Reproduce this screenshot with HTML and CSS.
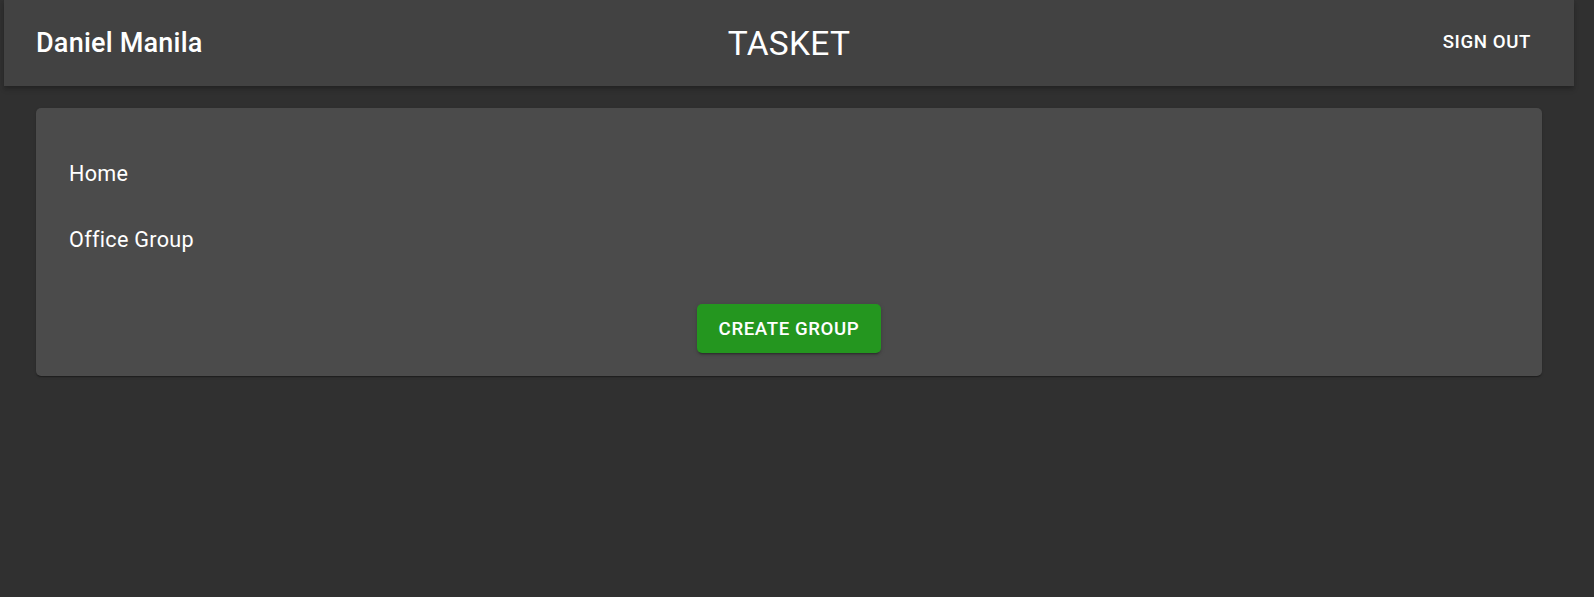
FILE: index.html
```html
<!DOCTYPE html>
<html>
<head>
    <meta charset="UTF-8">
    <title>Tasket</title>
    <link rel="stylesheet" href="styles.css">
</head>
<body>
    <header class="topbar">
        <div class="user-name">Daniel Manila</div>
        <div class="brand">TASKET</div>
        <div class="topbar-right">
            <button class="sign-out">Sign Out</button>
        </div>
    </header>

    <main class="page">
        <section class="group-card">
            <ul class="group-list">
                <li class="group-item">Home</li>
                <li class="group-item">Office Group</li>
            </ul>
            <div class="card-actions">
                <button class="create-btn">Create Group</button>
            </div>
        </section>
    </main>
</body>
</html>
```

FILE: styles.css
```css
body {
  margin: 0;
  background-color: #303030;
  color: #fff;
  font-family: Roboto, "Liberation Sans", sans-serif;
  min-height: 597px;
}

.topbar {
  display: grid;
  grid-template-columns: 1fr auto 1fr;
  align-items: center;
  height: 86px;
  margin-left: 4px;
  width: 1570px;
  padding: 0 32px;
  box-sizing: border-box;
  background-color: #424242;
  box-shadow: 0 2px 4px -1px rgba(0, 0, 0, 0.2), 0 4px 5px 0 rgba(0, 0, 0, 0.14);
}

/* medium weight */
.user-name,
.sign-out,
.create-btn {
  font-family: "Roboto Medium", Roboto, "Liberation Sans", sans-serif;
  font-weight: 400;
}

.user-name {
  font-size: 27px;
  letter-spacing: 0.2px;
}

.brand {
  font-size: 33.5px;
  font-weight: 400;
  letter-spacing: 0.3px;
  padding-top: 1px;
}

.topbar-right {
  display: flex;
  justify-content: flex-end;
}

.sign-out {
  background: transparent;
  border: none;
  color: #fff;
  font-size: 18.67px;
  letter-spacing: 0.6px;
  text-transform: uppercase;
  padding: 8px 11px;
  margin-top: -2px;
}

.page {
  margin-left: 4px;
  width: 1570px;
  padding: 22px 32px;
  box-sizing: border-box;
}

.group-card {
  background-color: #4b4b4b;
  border-radius: 5px;
  padding: 32px 32px 23px;
  box-shadow: 0 2px 1px -1px rgba(0, 0, 0, 0.2), 0 1px 1px 0 rgba(0, 0, 0, 0.14), 0 1px 3px 0 rgba(0, 0, 0, 0.12);
}

.group-list {
  list-style: none;
  margin: 0;
  padding: 0;
}

.group-item {
  height: 66px;
  display: flex;
  align-items: center;
  font-size: 21.6px;
  letter-spacing: 0.3px;
  padding-left: 1px;
}

.card-actions {
  display: flex;
  justify-content: center;
  margin-top: 32px;
}

.create-btn {
  background-color: #24961f;
  color: #fff;
  border: none;
  border-radius: 5px;
  height: 49px;
  padding: 0 22px;
  font-size: 18.67px;
  letter-spacing: 0.6px;
  text-transform: uppercase;
  box-shadow: 0 3px 1px -2px rgba(0, 0, 0, 0.2), 0 2px 2px 0 rgba(0, 0, 0, 0.14), 0 1px 5px 0 rgba(0, 0, 0, 0.12);
}
```
